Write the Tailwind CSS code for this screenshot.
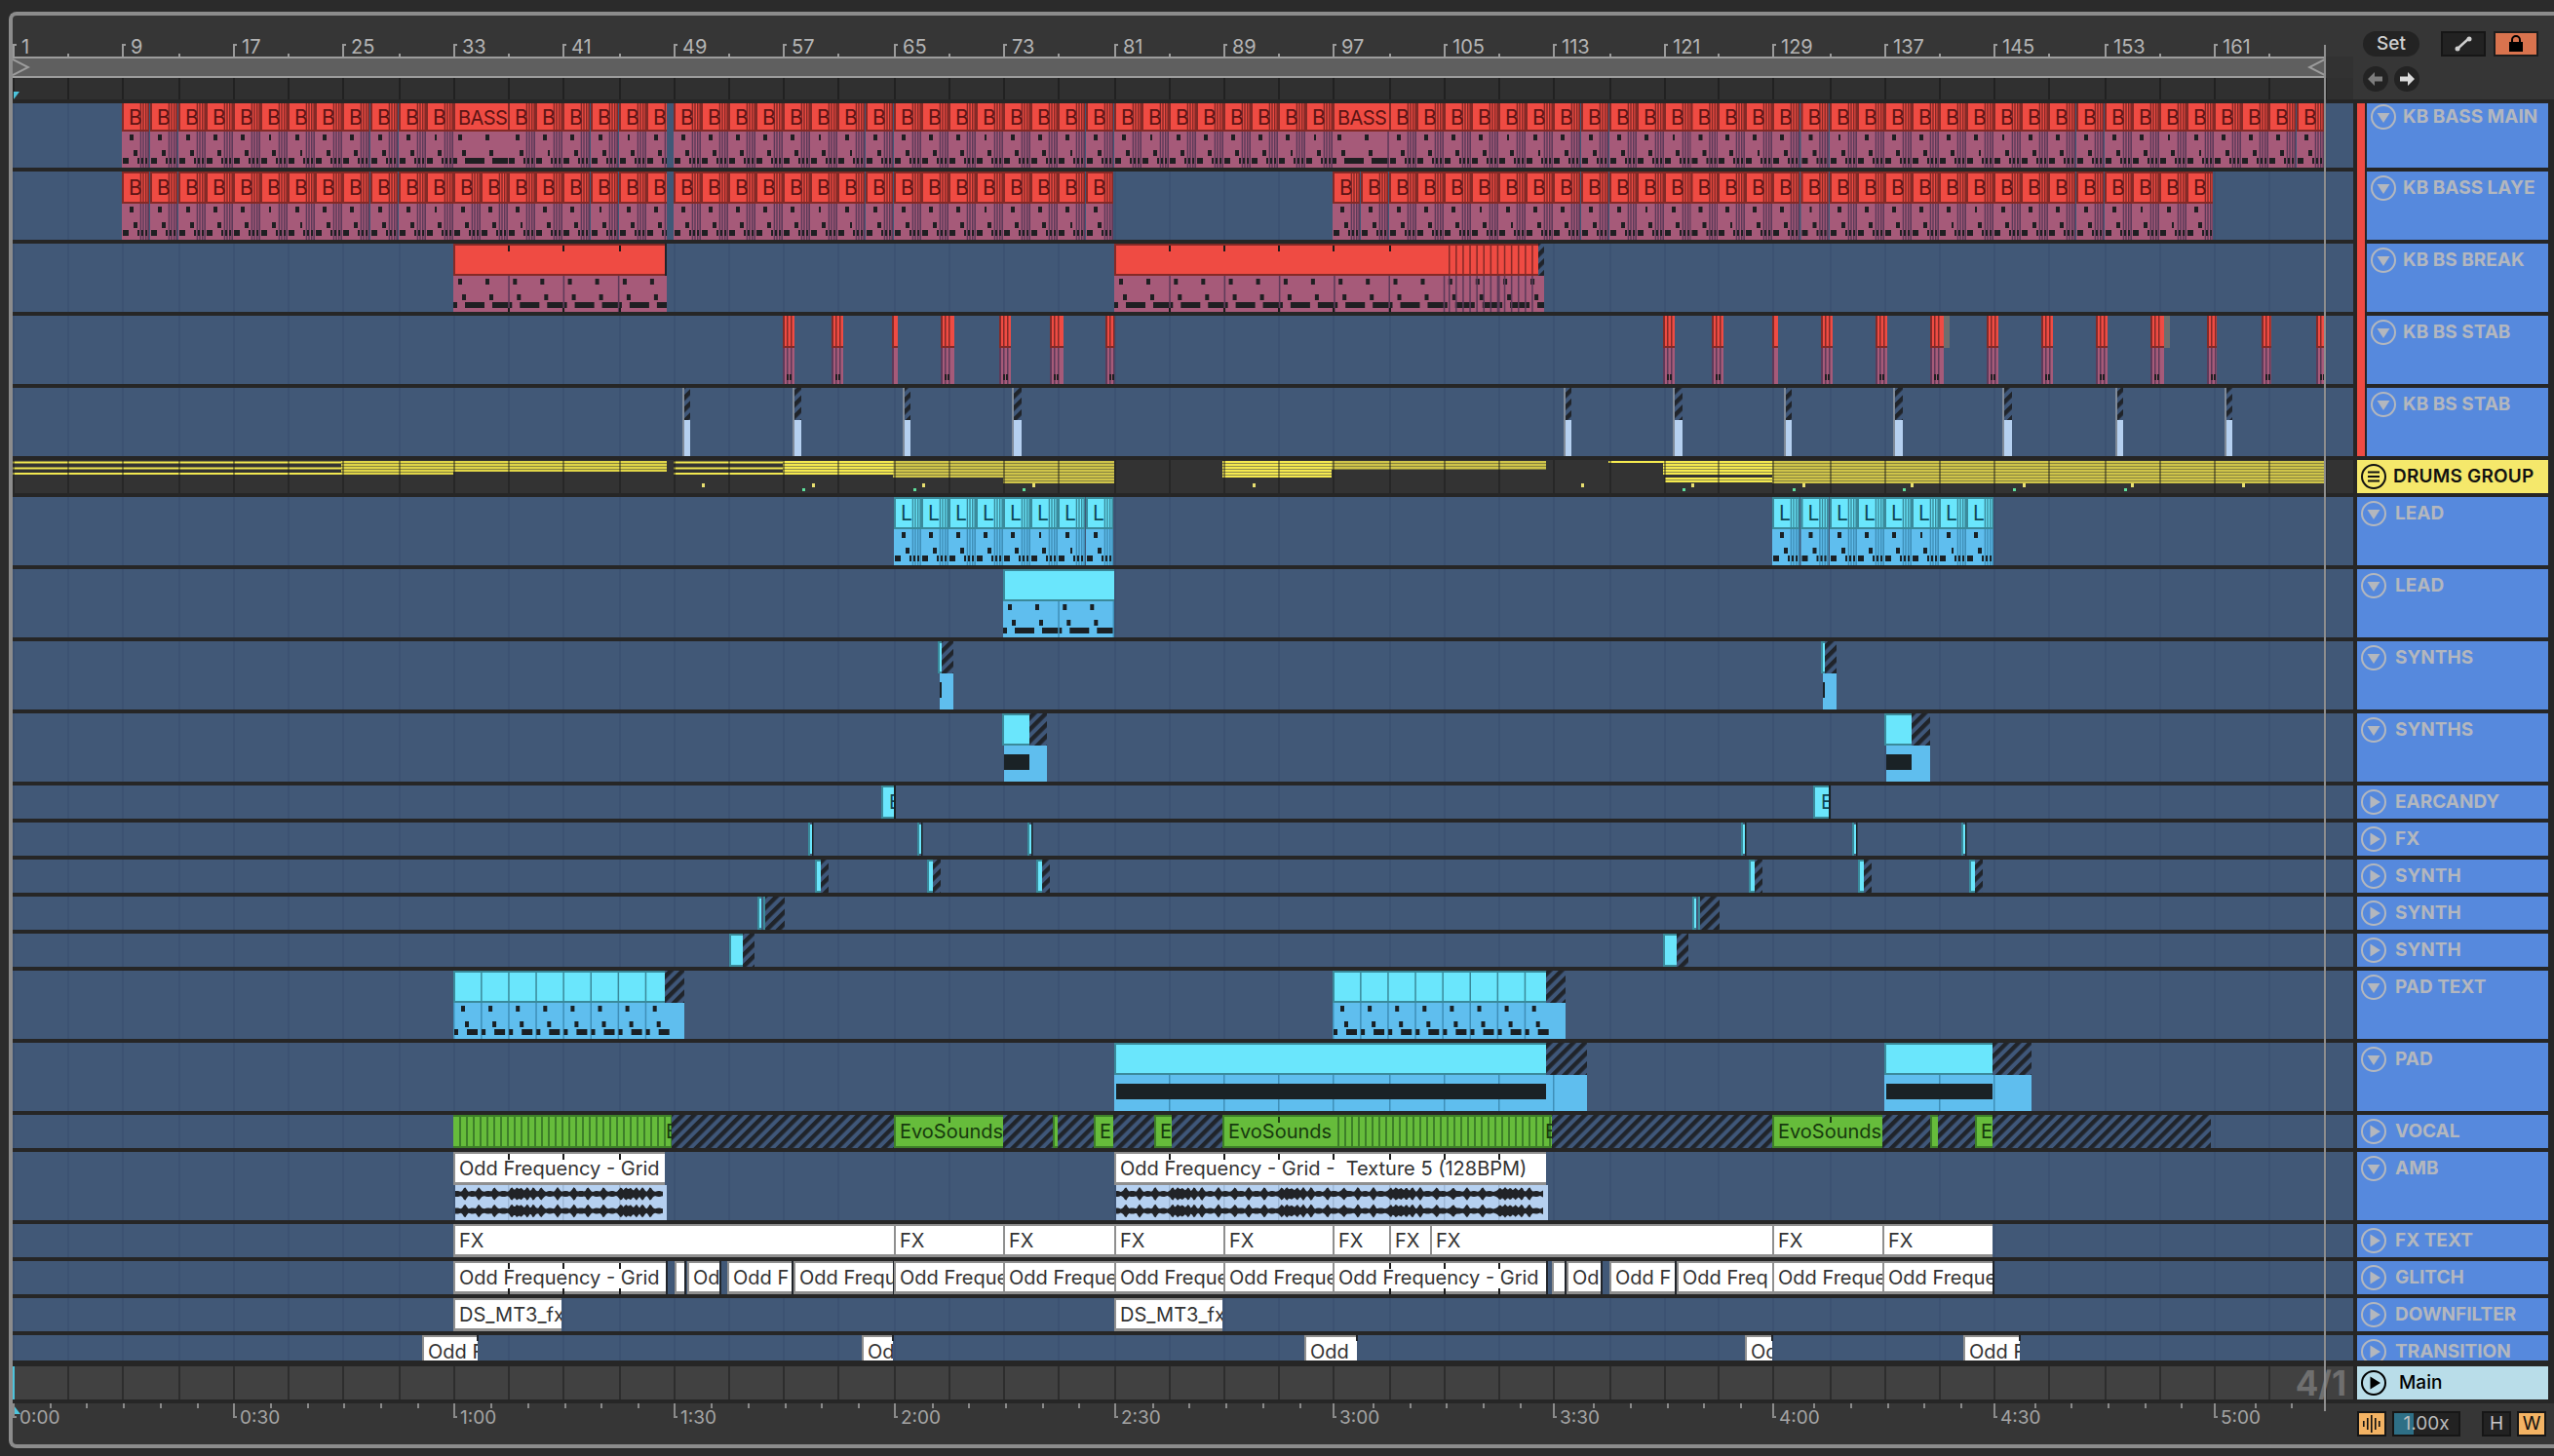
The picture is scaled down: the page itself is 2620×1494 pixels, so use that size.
<!DOCTYPE html>
<html lang="en">
<head>
  <meta charset="UTF-8" />
  <title>Arrangement View</title>
  <script src="https://cdn.jsdelivr.net/npm/@tailwindcss/browser@4"></script>
</head>
<body class="w-[2620px] h-[1494px] overflow-hidden bg-[#2b2b2b] pt-[12px] pl-[9px] [font-family:Inter,sans-serif]">

  <!-- shared hatch for the parts of clips that are switched off -->
  <svg class="absolute w-0 h-0">
    <defs>
      <pattern id="hatch" width="8.5" height="8.5" patternUnits="userSpaceOnUse" patternTransform="rotate(45)">
        <rect width="8.5" height="8.5" fill="#3f5779"></rect>
        <rect width="4.4" height="8.5" fill="#20242a"></rect>
      </pattern>
    </defs>
  </svg>

  <div class="relative flex flex-col w-[2611px] h-[1474px] border-y-4 border-l-4 border-[#8c8c8c] rounded-l-[8px] bg-[#363636]">

    <!-- Top: bar ruler, loop brace, empty lane, set buttons -->
    <div class="flex h-[90px] border-b-4 border-[#262626]">
      <div class="flex flex-col w-[2401px]">
        <div id="ruler" class="relative h-[42px] text-[#b4b4b4] text-[20px] leading-none"></div>
        <div class="flex h-[22px] bg-[#323232]">
          <div class="flex justify-between items-center w-[2372px] bg-[#5f5f5f] border-y-2 border-[#9c9c9c]">
            <svg width="18" height="18" viewBox="0 0 18 18" fill="none" stroke="#9c9c9c" stroke-width="2"><path d="M0 1 L16 9 L0 17"></path></svg>
            <svg width="18" height="18" viewBox="0 0 18 18" fill="none" stroke="#9c9c9c" stroke-width="2"><path d="M18 1 L2 9 L18 17"></path></svg>
          </div>
        </div>
        <div id="toplane" class="relative h-[22px] bg-[#303030]"></div>
      </div>
      <div class="flex-1 pl-[10px] pt-[16px]">
        <div class="flex items-center">
          <div class="flex items-center justify-center w-[58px] h-[26px] rounded-full bg-[#232323] text-[#d0d0d0] text-[19px] font-medium">Set</div>
          <div class="flex items-center justify-center ml-[22px] w-[46px] h-[26px] bg-[#222222] border-2 border-[#161616]">
            <svg width="22" height="20" viewBox="0 0 22 20" fill="none" stroke="#cfcfcf" stroke-width="2.4"><path d="M5 15 L16 5"></path><circle cx="5" cy="15" r="2.5" fill="#cfcfcf" stroke="none"></circle><circle cx="17" cy="5" r="2.5" fill="#cfcfcf" stroke="none"></circle></svg>
          </div>
          <div class="flex items-center justify-center ml-[8px] w-[46px] h-[26px] bg-[#d9734e] border-2 border-[#1d1d1d]">
            <svg width="16" height="18" viewBox="0 0 16 18" fill="#000"><path d="M1 7 H15 V17 H1 Z"></path><path d="M4 8 V5 A4 4 0 0 1 12 5 V8" fill="none" stroke="#000" stroke-width="2"></path></svg>
          </div>
        </div>
        <div class="flex gap-[6px] mt-[10px]">
          <div class="flex items-center justify-center w-[26px] h-[26px] rounded-full bg-[#232323]">
            <svg width="16" height="14" viewBox="0 0 16 14" fill="#7d7d7d"><path d="M0 7 L7 0 V4.5 H15 V9.5 H7 V14 Z"></path></svg>
          </div>
          <div class="flex items-center justify-center w-[26px] h-[26px] rounded-full bg-[#232323]">
            <svg width="16" height="14" viewBox="0 0 16 14" fill="#dadada"><path d="M16 7 L9 0 V4.5 H1 V9.5 H9 V14 Z"></path></svg>
          </div>
        </div>
      </div>
    </div>

    <!-- Tracks -->
    <div id="tracks" class="relative flex flex-col bg-[#262626]">
      <svg id="grid" class="absolute left-0 top-0" width="2401" height="1296"></svg>
      <div class="absolute left-[2405px] top-0 w-[8px] h-[362px] bg-[#ef4b43] z-10"></div>
    </div>

    <!-- Bottom lane and main track -->
    <div class="flex h-[38px] border-b-4 border-[#262626] bg-[#262626]">
      <div id="botlane" class="relative w-[2401px] bg-[#414141] overflow-hidden">
        <div class="absolute right-[7px] top-[0px] text-[#6f6f6f] text-[35px] leading-[34px] font-bold">4/1</div>
      </div>
      <div class="flex items-start w-[196px] ml-[4px] pl-[4px] pt-[4px] bg-[#b9dde9]">
        <svg width="26" height="26" viewBox="0 0 26 26"><circle cx="13" cy="13" r="12" fill="none" stroke="#000" stroke-width="2"></circle><path d="M9.5 6.5 L20 13 L9.5 19.5 Z" fill="#000"></path></svg>
        <span class="ml-[13px] text-[19px] leading-[26px] font-medium text-black">Main</span>
      </div>
    </div>

    <!-- Time ruler and bottom right buttons -->
    <div class="flex flex-1">
      <div id="timeruler" class="relative w-[2401px] text-[#a4a4a4] text-[19px] leading-none"></div>
      <div class="flex items-start pt-[8px] pl-[4px]">
        <div class="flex items-center justify-center w-[30px] h-[26px] bg-[#f3b364] border-2 border-[#161616]">
          <svg width="20" height="20" viewBox="0 0 20 20" fill="#111"><rect x="1" y="7" width="1.6" height="6"></rect><rect x="5" y="4" width="1.6" height="12"></rect><rect x="9" y="1" width="1.6" height="18"></rect><rect x="13" y="4" width="1.6" height="12"></rect><rect x="17" y="7" width="1.6" height="6"></rect></svg>
        </div>
        <div class="relative flex items-center justify-center ml-[6px] w-[70px] h-[26px] bg-[#222222] border-2 border-[#161616] text-[#bcbcbc] text-[19px]">
          <div class="absolute left-0 top-0 bottom-0 w-[20px] bg-[#2e6f86]"></div>
          <span class="relative">1.00x</span>
        </div>
        <div class="flex items-center justify-center ml-[22px] w-[30px] h-[26px] bg-[#222222] border-2 border-[#161616] text-[#c8c8c8] text-[19px]">H</div>
        <div class="flex items-center justify-center ml-[6px] w-[30px] h-[26px] bg-[#f3b364] border-2 border-[#161616] text-[#111111] text-[19px]">W</div>
      </div>
    </div>

    <!-- loop end marker runs through everything -->
    <div class="absolute left-[2371px] top-[30px] w-[2px] h-[1402px] bg-[#8e8e8e] z-20"></div>
  </div>

  <script>
    // x position of every 4th bar, read off the grid (bar 1, 5, 9 ...)
    const G = [13,69,125,183,239,295,351,409,465,521,577,635,691,747,803,859,917,973,1029,1085,1143,1199,1255,1311,1367,1425,1481,1537,1593,1651,1707,1762,1818,1877,1933,1989,2045,2101,2159,2215,2271,2327,2385];
    const X = bar => {
      const p = (bar - 1) / 4, i = Math.floor(p);
      return G[i] + (p - i) * ((G[i + 1] ?? G[i] + 56) - G[i]);
    };

    const RED = { t: '#ef4b43', d: '#842a27', b: '#a65a79', bd: '#5d3a59', n: '#1f1f22', tx: 'text-[#5c1414]' };
    const CY = { t: '#6ae6fc', d: '#3a8a9b', b: '#5fbeee', bd: '#3f8fb8', n: '#1a2024', tx: 'text-[#0e4654]' };
    const LIGHT = '#b5d0f0', GREEN = '#66bc3b', GREEND = '#3d7f29';

    // a lane gets one svg for the shapes and plain divs for the clip names
    function canvas() {
      const c = { svg: '', html: '', maxX: Infinity };
      c.rect = (x, y, w, h, fill) => {
        if (x + w > c.maxX) w = c.maxX - x;
        if (w > 0) c.svg += `<rect x="${x}" y="${y}" width="${w}" height="${h}" fill="${fill}"/>`;
      };
      c.path = (d, fill) => { c.svg += `<path d="${d}" fill="${fill}"/>`; };
      c.label = (x, w, y, h, text, cls) => {
        c.html += `<div class="absolute flex items-center overflow-hidden whitespace-nowrap text-[20px] leading-none ${cls}" style="left:${x - 13}px;top:${y}px;width:${w}px;height:${h}px">${text}</div>`;
      };
      c.out = (w, h) => `<svg class="absolute left-0 top-0" width="${w}" height="${h}"><g transform="translate(-13,0)">${c.svg}</g></svg>${c.html}`;
      return c;
    }

    function unit(c, x, letter, p, i, o) {
      c.rect(x, o, 28, 33, p.t);
      c.rect(x, o, 28, 2, p.d);
      c.rect(x, o + 31, 28, 2, p.d);
      c.rect(x, o, 2, 33, p.d);
      c.rect(x, o + 33, 28, 37, p.b);
      for (const s of [18.7, 21.3, 24]) {
        c.rect(x + s, o, 1.4, 33, p.d);
        c.rect(x + s, o + 33, 1.4, 37, p.bd);
      }
      c.rect(x + 26.4, o, 1.6, 33, p.d);
      c.rect(x + 26.4, o + 33, 1.6, 37, p.bd);
      if (i % 6 === 5) c.rect(x + 9, o + 36, 2, 6, p.n); else c.rect(x + 8, o + 36, 4, 6, p.n);
      if (i % 8 === 6) c.rect(x + 13, o + 52, 2, 6, p.n); else c.rect(x + 12, o + 52, 4, 6, p.n);
      for (const [a, b] of [[1, 7], [16, 18], [20, 22], [24, 26]]) c.rect(x + a, o + 60, b - a, 6, p.n);
      if (c.maxX > x + 8) c.label(x + 7, Math.min(18, c.maxX - x - 7), Math.max(o, 0), 33 + Math.min(o, 0), letter, `${p.tx} text-[21px]`);
    }

    function notes56(c, x, end, p, o) {
      const keep = c.maxX;
      c.maxX = end;
      for (let u = x; u < end; u += 56.3) {
        c.rect(u + 5, o + 36, 4, 6, p.n);
        c.rect(u + 33, o + 36, 4, 6, p.n);
        c.rect(u + 9, o + 52, 4, 6, p.n);
        c.rect(u + 37, o + 52, 4, 6, p.n);
        c.rect(u, o + 60, 4, 6, p.n);
        c.rect(u + 12, o + 60, 20, 6, p.n);
        c.rect(u + 40, o + 60, 16.3, 6, p.n);
        if (u > x) c.rect(u, o + 33, 1.5, 37, p.bd);
      }
      c.maxX = keep;
    }

    function solid(c, x, end, p, o) {
      c.rect(x, o, end - x, 33, p.t);
      c.rect(x, o, end - x, 2, p.d);
      c.rect(x, o + 31, end - x, 2, p.d);
      c.rect(x, o, 2, 33, p.d);
      c.rect(x, o + 33, end - x, 37, p.b);
      notes56(c, x, end, p, o);
    }

    function ticks(c, x, end, y, color) {
      for (const g of G) if (g > x + 4 && g < end - 4) c.rect(g, y, 2, 6, color || '#1b1b1b');
    }

    const hatch = (c, x, w, h, y) => c.rect(x, y || 0, w, h || 34, 'url(#hatch)');

    function cyanShort(c, x, w, h) {
      h = h || 34;
      c.rect(x, 0, w, h, CY.d);
      c.rect(x + 2, 2, w - 2, h - 4, CY.t);
    }

    function white(c, x, w, text, h) {
      h = h || 34;
      c.rect(x, 0, w, h, '#8f8f8f');
      c.rect(x + 2, 2, w - 2, h === 34 ? 29 : h, '#ffffff');
      c.label(x + 6, w - 6, 0, h === 34 ? 34 : h + 8, text, 'text-[#333333]');
    }

    function wave(c, x, end, mid) {
      const bumps = [10, 24, 40, 58, 63, 68, 74, 80, 88, 105];
      const amp = v => {
        const p = (v - x) % 112;
        let a = 2 + Math.abs(Math.sin(v * 1.7)) * 1.1;
        for (const b of bumps) a += 3.8 * Math.exp(-Math.pow((p - b) / 2, 2));
        return Math.min(a, 7);
      };
      let up = '', down = '';
      for (let v = x; v <= end; v += 1.5) {
        const a = amp(v).toFixed(1);
        up += `L${v} ${mid - a} `;
        down = `L${v} ${mid + +a} ` + down;
      }
      c.path(`M${x} ${mid} ${up}${down}Z`, '#212327');
    }

    function amb(c, x, end, text) {
      white(c, x, end - x - 2, text);
      c.rect(x + 2, 34, end - x - 2, 36, LIGHT);
      for (const g of G) if (g > x && g < end) c.rect(g, 34, 1.5, 36, '#9db7d6');
      wave(c, x + 2, end - 4, 43);
      wave(c, x + 2, end - 4, 60.5);
      ticks(c, x, end, 2);
    }

    function greenStripes(c, x, end) {
      c.rect(x, 0, end - x, 34, GREEN);
      for (let u = x + 6; u < end; u += 7) c.rect(u, 0, 2, 34, GREEND);
      c.rect(x, 0, end - x, 2, GREEND);
      c.rect(x, 32, end - x, 2, GREEND);
    }

    function green(c, x, end, text) {
      c.rect(x, 0, end - x, 34, GREEND);
      c.rect(x + 2, 2, end - x - 2, 30, GREEN);
      if (text) c.label(x + 6, end - x - 6, 0, 34, text, 'text-[#173a0e]');
      ticks(c, x, end, 2, '#1d3a12');
    }

    function drumBand(c, x, end, y, h, bright, dull) {
      c.rect(x, y, end - x, h, dull);
      for (let v = y; v < y + h; v += 3) c.rect(x, v, end - x, 2, bright);
    }

    function sparse(c, x, end) {
      for (const y of [1.5, 7.5, 13]) c.rect(x, y, end - x, 2, '#f2e850');
    }

    function stab(c, x, w) {
      c.rect(x, 0, w, 33, RED.t);
      c.rect(x, 0, 2, 33, RED.d);
      c.rect(x, 31, w, 2, RED.d);
      c.rect(x, 33, w, 37, RED.b);
      c.rect(x, 33, 2, 37, RED.bd);
      if (w > 8) {
        c.rect(x + 4, 0, 1.5, 33, RED.d);
        c.rect(x + 8, 0, 1.5, 33, RED.d);
        c.rect(x + 4, 33, 1.5, 37, RED.bd);
        c.rect(x + 8, 33, 1.5, 37, RED.bd);
        c.rect(x + 4, 60, 2, 6, RED.n);
        c.rect(x + 7, 60, 2, 6, RED.n);
      }
    }

    function synthTall(c, x, titleEnd, end, bar) {
      c.rect(x, 0, titleEnd - x, 33, CY.t);
      c.rect(x, 0, titleEnd - x, 2, CY.d);
      c.rect(x, 31, titleEnd - x, 2, CY.d);
      c.rect(x, 0, 2, 33, CY.d);
      hatch(c, titleEnd, end - titleEnd, 33);
      c.rect(x + 2, 33, end - x - 2, 37, CY.b);
      if (bar) c.rect(x + 2, 42, titleEnd - x - 2, 16, '#1a2226');
    }

    const fills = {
      bassMain(c) {
        c.maxX = 684;
        for (let b = 9, i = 0; b < 49; b += 2, i++) {
          if (b === 33) { solid(c, X(33), X(37), RED, -4); c.label(X(33) + 5, 50, 0, 29, 'BASS', `${RED.tx} tracking-[-0.6px]`); b += 2; continue; }
          unit(c, X(b), 'B', RED, i, -4);
        }
        c.maxX = 2385;
        for (let b = 49, i = 0; b < 169; b += 2, i++) {
          if (b === 97) { solid(c, X(97), X(101), RED, -4); c.label(X(97) + 5, 50, 0, 29, 'BASS', `${RED.tx} tracking-[-0.6px]`); b += 2; continue; }
          unit(c, X(b), 'B', RED, i, -4);
        }
      },
      bassLayer(c) {
        c.maxX = 684;
        for (let b = 9, i = 0; b < 49; b += 2, i++) unit(c, X(b), 'B', RED, i, 0);
        c.maxX = 1142;
        for (let b = 49, i = 0; b < 81; b += 2, i++) unit(c, X(b), 'B', RED, i, 0);
        c.maxX = 2270;
        for (let b = 97, i = 0; b < 161; b += 2, i++) unit(c, X(b), 'B', RED, i, 0);
      },
      bassBreak(c) {
        solid(c, 465, 684, RED, 0);
        ticks(c, 465, 684, 2);
        ticks(c, 465, 684, 66);
        c.rect(682, 0, 2, 33, '#20242a');
        solid(c, 1143, 1584, RED, 0);
        ticks(c, 1143, 1480, 2);
        ticks(c, 1143, 1480, 66);
        c.rect(1578, 0, 6, 33, 'url(#hatch)');
        for (let u = 1486; u < 1578; u += 7.1) {
          c.rect(u, 0, 1.5, 33, RED.d);
          c.rect(u, 33, 1.5, 37, RED.bd);
        }
      },
      stabA(c) {
        const at = [[803, 12], [853, 12], [915, 6], [965, 14], [1025, 12], [1077, 14], [1134, 9],
          [1706, 12], [1756, 12], [1818, 6], [1868, 12], [1924, 12], [1980, 14], [2038, 12], [2094, 12], [2150, 12], [2206, 14], [2264, 10], [2320, 10], [2376, 9]];
        for (const [x, w] of at) stab(c, x, w);
        c.rect(1994, 0, 6, 33, '#6e6e6e');
        c.rect(2220, 0, 6, 33, '#6e6e6e');
      },
      stabB(c) {
        for (const [x, w] of [[700, 6], [813, 7], [926, 6], [1038, 8], [1604, 6], [1716, 8], [1830, 6], [1942, 8], [2054, 8], [2170, 6], [2282, 6]]) {
          c.rect(x, 0, 2, 70, '#7f8a98');
          hatch(c, x + 2, w, 33);
          c.rect(x + 2, 33, w, 37, LIGHT);
        }
      },
      drums(c) {
        const br = '#f5ea4f', du = '#8f8c4c', go = '#e0d548', ol = '#cfc44a', dk = '#86823f';
        sparse(c, 13, 350);
        drumBand(c, 350, 465, 1, 14, go, dk);
        drumBand(c, 465, 684, 1, 10, go, dk);
        sparse(c, 691, 803);
        drumBand(c, 803, 916, 1, 14, br, du);
        drumBand(c, 916, 1029, 1, 16, ol, dk);
        drumBand(c, 1029, 1143, 1, 22, ol, dk);
        drumBand(c, 1254, 1366, 1, 17, br, du);
        drumBand(c, 1366, 1586, 1, 9, ol, dk);
        c.rect(1650, 1, 56, 2, br);
        drumBand(c, 1706, 1818, 1, 13, br, du);
        drumBand(c, 1708, 1818, 18, 5, br, du);
        drumBand(c, 1818, 2385, 1, 22, ol, dk);
        for (const x of [720, 833, 946, 1059, 1285, 1622, 1735, 1849, 1960, 2075, 2186, 2300]) c.rect(x, 24, 3, 4, '#e8df70');
        for (const x of [823, 937, 1049, 1726, 1839, 1952, 2065, 2179]) c.rect(x, 29, 3, 3, '#5ddf9c');
        for (const g of G) c.rect(g, 0, 2, 34, '#1a1a1a77');
      },
      lead(c) {
        c.maxX = 1143;
        for (let b = 65, i = 0; b < 81; b += 2, i++) unit(c, X(b), 'L', CY, i, 0);
        c.maxX = 2046;
        for (let b = 129, i = 0; b < 145; b += 2, i++) unit(c, X(b), 'L', CY, i, 0);
      },
      lead2(c) {
        solid(c, 1029, 1143, CY, 0);
      },
      synths1(c) {
        for (const x of [962, 1868]) {
          synthTall(c, x, x + 4, x + 16);
          c.rect(x + 2, 42, 2, 16, '#1a2226');
        }
      },
      synths2(c) {
        synthTall(c, 1028, 1056, 1074, true);
        synthTall(c, 1933, 1961, 1980, true);
      },
      earcandy(c) {
        for (const [x, w] of [[904, 13], [1860, 16]]) {
          cyanShort(c, x, w);
          c.rect(x + w, 0, 2, 34, '#1a2226');
          c.label(x + 8, w - 8, 0, 34, 'E', CY.tx);
        }
      },
      fx(c) {
        for (const x of [829, 941, 1054, 1786, 1900, 2012]) {
          c.rect(x, 0, 2, 34, CY.d);
          c.rect(x + 2, 2, 2, 30, CY.t);
          c.rect(x + 4, 0, 1.5, 34, '#1a2226');
        }
      },
      synthA(c) {
        for (const x of [836, 951, 1063, 1794, 1906, 2020]) {
          cyanShort(c, x, 6);
          hatch(c, x + 6, 8);
        }
      },
      synthB(c) {
        for (const x of [777, 1736]) {
          cyanShort(c, x, 4);
          c.rect(x + 6, 0, 2, 34, CY.d);
          hatch(c, x + 8, 20);
        }
      },
      synthC(c) {
        for (const x of [748, 1706]) {
          cyanShort(c, x, 14);
          hatch(c, x + 14, 12);
        }
      },
      padText(c) {
        for (const [x, t, e] of [[465, 682, 702], [1367, 1586, 1606]]) {
          c.rect(x, 0, t - x, 33, CY.t);
          c.rect(x, 31, t - x, 2, CY.d);
          c.rect(x, 0, 2, 33, CY.d);
          c.rect(x, 0, t - x, 2, CY.d);
          hatch(c, t, e - t, 33);
          c.rect(x, 33, e - x, 37, CY.b);
          for (let u = x; u < t; u += 28.1) {
            c.rect(u, 0, 1.5, 33, CY.d);
            c.rect(u, 33, 1.5, 37, CY.bd);
            c.rect(u + 8, 36, 4, 6, CY.n);
            c.rect(u + 12, 52, 4, 6, CY.n);
            c.rect(u + 1, 60, 4, 6, CY.n);
            c.rect(u + 14, 60, 11, 6, CY.n);
          }
        }
      },
      pad(c) {
        for (const [x, t, e] of [[1143, 1586, 1628], [1933, 2044, 2084]]) {
          c.rect(x, 0, t - x, 33, CY.t);
          c.rect(x, 0, t - x, 2, CY.d);
          c.rect(x, 31, t - x, 2, CY.d);
          c.rect(x, 0, 2, 33, CY.d);
          hatch(c, t, e - t, 33);
          c.rect(x, 33, e - x, 37, CY.b);
          for (const g of G) if (g > x && g < e) c.rect(g, 33, 1.5, 37, CY.bd);
          c.rect(x + 2, 42, t - x - 2, 16, '#1a2226');
        }
      },
      vocal(c) {
        greenStripes(c, 465, 689);
        c.label(683, 6, 0, 34, 'E', 'text-[#173a0e]');
        hatch(c, 689, 228);
        green(c, 917, 1029, 'EvoSounds');
        hatch(c, 1029, 51);
        green(c, 1080, 1085);
        hatch(c, 1085, 37);
        green(c, 1122, 1142, 'E');
        hatch(c, 1142, 42);
        green(c, 1184, 1202, 'E');
        hatch(c, 1202, 52);
        green(c, 1254, 1366, 'EvoSounds');
        greenStripes(c, 1366, 1592);
        c.label(1585, 7, 0, 34, 'E', 'text-[#173a0e]');
        hatch(c, 1592, 226);
        green(c, 1818, 1931, 'EvoSounds');
        hatch(c, 1931, 49);
        green(c, 1980, 1988);
        hatch(c, 1988, 38);
        green(c, 2026, 2044, 'E');
        hatch(c, 2044, 224);
      },
      ambience(c) {
        amb(c, 465, 684, 'Odd Frequency - Grid');
        amb(c, 1143, 1588, 'Odd Frequency - Grid -&nbsp; Texture 5 (128BPM)');
      },
      fxText(c) {
        const e = [465, 917, 1029, 1143, 1255, 1367, 1425, 1467, 1818, 1931, 2044];
        for (let i = 0; i < e.length - 1; i++) white(c, e[i], e[i + 1] - e[i], 'FX');
      },
      glitch(c) {
        const clips = [[465, 683, 'Odd Frequency - Grid'], [692, 702, ''], [705, 738, 'Od'], [746, 812, 'Odd F'], [814, 916, 'Odd Frequ'],
          [917, 1029, 'Odd Freque'], [1029, 1143, 'Odd Freque'], [1143, 1255, 'Odd Freque'], [1255, 1367, 'Odd Freque'], [1367, 1586, 'Odd Frequency - Grid'],
          [1592, 1605, ''], [1607, 1642, 'Od'], [1651, 1718, 'Odd F'], [1720, 1818, 'Odd Freq'], [1818, 1931, 'Odd Freque'], [1931, 2044, 'Odd Freque']];
        for (const [a, b, text] of clips) {
          white(c, a, b - a, text);
          c.rect(b, 0, 2, 34, '#20242a');
        }
        ticks(c, 465, 683, 2);
        ticks(c, 465, 683, 28);
        ticks(c, 1367, 1586, 2);
        ticks(c, 1367, 1586, 28);
      },
      downfilter(c) {
        white(c, 465, 111, 'DS_MT3_fx');
        white(c, 1143, 111, 'DS_MT3_fx');
      },
      transition(c) {
        for (const [a, b, text] of [[433, 490, 'Odd F'], [884, 916, 'Od'], [1338, 1392, 'Odd'], [1790, 1818, 'Od'], [2014, 2072, 'Odd F']]) {
          white(c, a, b - a, text, 26);
          c.rect(b - 1, 0, 2, 6, '#20242a');
        }
      }
    };

    const rows = [
      { name: 'KB BASS MAIN', h: 'h-[66px]', px: 66, icon: 'down', group: true, top: 'pt-[1px]', fill: 'bassMain' },
      { name: 'KB BASS LAYE', h: 'h-[70px]', px: 70, icon: 'down', group: true, top: 'pt-[4px]', fill: 'bassLayer' },
      { name: 'KB BS BREAK', h: 'h-[70px]', px: 70, icon: 'down', group: true, top: 'pt-[4px]', fill: 'bassBreak' },
      { name: 'KB BS STAB', h: 'h-[70px]', px: 70, icon: 'down', group: true, top: 'pt-[4px]', fill: 'stabA' },
      { name: 'KB BS STAB', h: 'h-[70px]', px: 70, icon: 'down', group: true, top: 'pt-[4px]', fill: 'stabB' },
      { name: 'DRUMS GROUP', h: 'h-[34px]', px: 34, icon: 'menu', top: 'pt-[4px]', fill: 'drums', dark: true },
      { name: 'LEAD', h: 'h-[70px]', px: 70, icon: 'down', top: 'pt-[4px]', fill: 'lead' },
      { name: 'LEAD', h: 'h-[70px]', px: 70, icon: 'down', top: 'pt-[4px]', fill: 'lead2' },
      { name: 'SYNTHS', h: 'h-[70px]', px: 70, icon: 'down', top: 'pt-[4px]', fill: 'synths1' },
      { name: 'SYNTHS', h: 'h-[70px]', px: 70, icon: 'down', top: 'pt-[4px]', fill: 'synths2' },
      { name: 'EARCANDY', h: 'h-[34px]', px: 34, icon: 'right', top: 'pt-[4px]', fill: 'earcandy' },
      { name: 'FX', h: 'h-[34px]', px: 34, icon: 'right', top: 'pt-[4px]', fill: 'fx' },
      { name: 'SYNTH', h: 'h-[34px]', px: 34, icon: 'right', top: 'pt-[4px]', fill: 'synthA' },
      { name: 'SYNTH', h: 'h-[34px]', px: 34, icon: 'right', top: 'pt-[4px]', fill: 'synthB' },
      { name: 'SYNTH', h: 'h-[34px]', px: 34, icon: 'right', top: 'pt-[4px]', fill: 'synthC' },
      { name: 'PAD TEXT', h: 'h-[70px]', px: 70, icon: 'down', top: 'pt-[4px]', fill: 'padText' },
      { name: 'PAD', h: 'h-[70px]', px: 70, icon: 'down', top: 'pt-[4px]', fill: 'pad' },
      { name: 'VOCAL', h: 'h-[34px]', px: 34, icon: 'right', top: 'pt-[4px]', fill: 'vocal' },
      { name: 'AMB', h: 'h-[70px]', px: 70, icon: 'down', top: 'pt-[4px]', fill: 'ambience' },
      { name: 'FX TEXT', h: 'h-[34px]', px: 34, icon: 'right', top: 'pt-[4px]', fill: 'fxText' },
      { name: 'GLITCH', h: 'h-[34px]', px: 34, icon: 'right', top: 'pt-[4px]', fill: 'glitch' },
      { name: 'DOWNFILTER', h: 'h-[34px]', px: 34, icon: 'right', top: 'pt-[4px]', fill: 'downfilter' },
      { name: 'TRANSITION', h: 'h-[26px]', px: 26, icon: 'right', top: 'pt-[4px]', fill: 'transition', last: true }
    ];

    function icon(kind, color) {
      const shape = kind === 'down'
        ? `<path d="M6.5 9 H19.5 L13 19 Z" fill="${color}"/>`
        : kind === 'right'
          ? `<path d="M9.5 6.5 L20 13 L9.5 19.5 Z" fill="${color}"/>`
          : `<path d="M7 8.5 H19 M7 13 H19 M7 17.5 H19" stroke="${color}" stroke-width="2"/>`;
      return `<svg class="shrink-0" width="26" height="26" viewBox="0 0 26 26"><circle cx="13" cy="13" r="12" fill="none" stroke="${color}" stroke-width="2"/>${shape}</svg>`;
    }

    // grid behind all lanes
    let gridSvg = '<rect width="2401" height="1296" fill="#415877"/>';
    for (const g of G) gridSvg += `<rect x="${g - 13}" y="0" width="2" height="1296" fill="#3c5272"/>`;
    document.getElementById('grid').innerHTML = gridSvg;

    let tracksHtml = '';
    for (const r of rows) {
      const c = canvas();
      fills[r.fill](c);
      const laneBg = r.dark ? 'bg-[#333333]' : '';
      const head = r.dark
        ? `<div class="flex w-[196px] ml-[4px] pl-[4px] ${r.top} bg-[#f5e86b] overflow-hidden">${icon(r.icon, '#111111')}<span class="ml-[7px] text-[19px] leading-[26px] font-semibold tracking-[0.2px] text-[#111111]">${r.name}</span></div>`
        : r.group
          ? `<div class="flex w-[186px] ml-[14px] pl-[4px] ${r.top} bg-[#5689dd] overflow-hidden">${icon(r.icon, '#b3b7be')}<span class="ml-[7px] text-[19px] leading-[26px] font-bold text-[#b3b7be]">${r.name}</span></div>`
          : `<div class="flex w-[196px] ml-[4px] pl-[4px] ${r.top} bg-[#5689dd] overflow-hidden">${icon(r.icon, '#b3b7be')}<span class="ml-[9px] text-[19px] leading-[26px] font-bold text-[#b3b7be]">${r.name}</span></div>`;
      const border = r.last ? 'border-b-0' : 'border-b-4';
      tracksHtml += `<div class="relative flex box-content ${r.h} ${border} border-[#262626]"><div class="relative w-[2401px] overflow-hidden ${laneBg}">${c.out(2401, r.px)}</div>${head}</div>`;
    }
    document.getElementById('tracks').insertAdjacentHTML('beforeend', tracksHtml + '<div class="relative h-[6px] bg-[#262626]"></div>');

    // lanes above and below the tracks
    const line = (g, h, fill) => `<div class="absolute top-0 w-[2px]" style="left:${g - 13}px;height:${h}px;background:${fill}"></div>`;
    document.getElementById('toplane').innerHTML = G.map(g => line(g, 22, '#212121')).join('') +
      '<svg class="absolute left-0 top-[14px]" width="8" height="8"><path d="M1 0 H7 L1 8 Z" fill="#4cc4dc"/></svg>';
    document.getElementById('botlane').insertAdjacentHTML('afterbegin', G.map(g => line(g, 34, '#2d2d2d')).join('') +
      '<div class="absolute left-0 top-0 w-[2px] h-[34px] bg-[#4cc4dc]"></div>');

    // bar numbers
    let ruler = '';
    for (let b = 1; b < 169; b += 4) {
      const x = X(b) - 13;
      if ((b - 1) % 8 === 0) {
        ruler += `<div class="absolute top-[29px] h-[13px] w-[4px] border-l-2 border-t-2 border-[#9a9a9a]" style="left:${x}px"></div>`;
        if (b < 165) ruler += `<span class="absolute top-[22px]" style="left:${x + 9}px">${b}</span>`;
      } else {
        ruler += `<div class="absolute top-[39px] h-[3px] w-[2px] bg-[#9a9a9a]" style="left:${x}px"></div>`;
      }
    }
    document.getElementById('ruler').innerHTML = ruler;

    // time ruler
    const times = [[13, '0:00'], [239, '0:30'], [465, '1:00'], [691, '1:30'], [917, '2:00'], [1143, '2:30'], [1367, '3:00'], [1593, '3:30'], [1818, '4:00'], [2045, '4:30'], [2271, '5:00']];
    let tr = '<svg class="absolute left-0 top-[2px]" width="8" height="9"><path d="M1 0 L8 9 H1 Z" fill="#4cc4dc"/></svg>';
    for (let i = 0; i < 63; i++) {
      if (i % 6) tr += `<div class="absolute top-0 w-[2px] h-[5px] bg-[#8a8a8a]" style="left:${i * 37.7}px"></div>`;
    }
    for (const [x, t] of times) {
      tr += `<div class="absolute top-0 h-[15px] w-[4px] border-l-2 border-b-2 border-[#8a8a8a]" style="left:${x - 13}px"></div>`;
      tr += `<span class="absolute top-[5px]" style="left:${x - 13 + 7}px">${t}</span>`;
    }
    document.getElementById('timeruler').innerHTML = tr;
  </script>
</body>
</html>
